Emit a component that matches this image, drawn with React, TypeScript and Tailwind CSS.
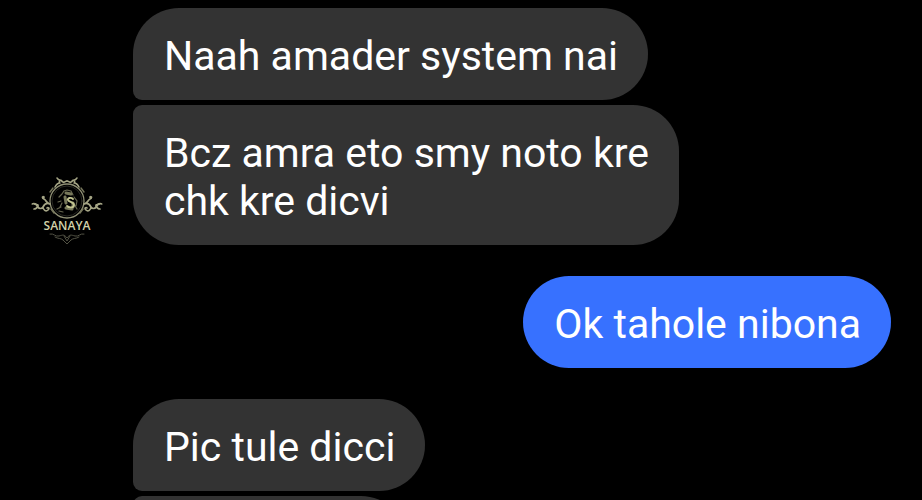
import { clsx } from 'clsx'

type Message = { id: number; text: string; corners: string }

const FIRST = 'rounded-[46px] rounded-bl-[9px]'
const LAST = 'rounded-[46px] rounded-tl-[9px]'

const earlier: Message[] = [
  { id: 1, text: 'Naah amader system nai', corners: FIRST },
  { id: 2, text: 'Bcz amra eto smy noto kre\nchk kre dicvi', corners: LAST },
]

// left half of the emblem, mirrored for the right one
function Scroll() {
  return (
    <>
      <path d="M19 31c-4-2-6 1-7 3s-4 2-5 0-3-4-6-3M7 33c-1 2-2 3-4 3M12 34c0 3 3 5 5 3s0-3-1-2" strokeWidth="1.7" />
      <path d="M17 30c-2-1-2-3-4-4s-2-3 0-2M4 31l3 1" strokeWidth="1.8" />
      <path d="M36 8c-2 0-2 2-4 1s-1-2-3-2-2-1-3-2M29 10c-3 0-4 2-5 4M29 7l-1 3" strokeWidth="1.6" />
      <path d="M22 15l-3 4M20 36l3 4" strokeWidth="1.4" stroke="#77775c" />
    </>
  )
}

function Avatar() {
  return (
    <svg viewBox="0 0 72 72" className="size-[72px] shrink-0 rounded-full bg-black" role="img" aria-label="Sanaya">
      <g fill="none" stroke="#a5a585" strokeLinecap="round">
        <circle cx="36" cy="28" r="17" strokeWidth="1.3" stroke="#8f8f74" />
        <circle cx="36" cy="28" r="15" strokeWidth="0.6" stroke="#44443a" />
        <Scroll />
        <g transform="translate(72 0) scale(-1 1)">
          <Scroll />
        </g>
        {/* horse and mane */}
        <path d="M31 21l2-3 3-1 4 1 2 4M28 24l3-3M27 29l3-1M29 34l2-4M43 24l3 4-1 5M43 31l3 5M26 36l4-2M32 39l-4-1" stroke="#66664f" strokeWidth="1.2" />
        <path d="M35 20l5 1M34 24l1 6M35 35l6 1M42 30v4" stroke="#77785a" strokeWidth="3" />
        <path d="M42 26c-2-2-6-1-5 1s6 2 6 5-5 3-7 1" stroke="#c3c590" strokeWidth="1.8" />
        {/* lower flourish */}
        <path d="M19 61c4-1 5 3 9 2s5-2 8 2c3-4 4-3 8-2s5-3 9-2M24 64c3 2 6 1 8 3l4 4 4-4c2-2 5-1 8-3M33 63l3 5 3-5" stroke="#525244" strokeWidth="1" />
      </g>
      <text x="36" y="57" textAnchor="middle" fill="#d2d1a9" className="font-['Open_Sans'] text-[12px] font-semibold">
        SANAYA
      </text>
    </svg>
  )
}

function Bubble({ text, corners, sent }: { text: string; corners: string; sent?: boolean }) {
  return (
    <p
      className={clsx(
        'w-fit max-w-[560px] pt-6 pr-[30px] pb-5 pl-[31px] text-[41px] leading-[48px] whitespace-pre-line text-white',
        sent ? 'bg-[#3771ff]' : 'bg-[#333333]',
        corners,
      )}
    >
      {text}
    </p>
  )
}

export default function App() {
  return (
    <main className="flex h-screen flex-col gap-[31px] overflow-hidden bg-black px-[31px] pt-2 font-['Roboto',sans-serif]">
      <section className="flex shrink-0 items-end gap-[30px]">
        <Avatar />
        <div className="flex min-w-0 flex-col gap-[5px]">
          {earlier.map(m => (
            <Bubble key={m.id} text={m.text} corners={m.corners} />
          ))}
        </div>
      </section>

      <section className="flex shrink-0 justify-end">
        <Bubble text="Ok tahole nibona" corners="rounded-[46px]" sent />
      </section>

      <section className="flex shrink-0 flex-col gap-[5px] pl-[102px]">
        <Bubble text="Pic tule dicci" corners={FIRST} />
        {/* next message, still below the fold */}
        <div className={clsx('h-[92px] w-[274px] shrink-0 bg-[#333333]', LAST)} />
      </section>
    </main>
  )
}
